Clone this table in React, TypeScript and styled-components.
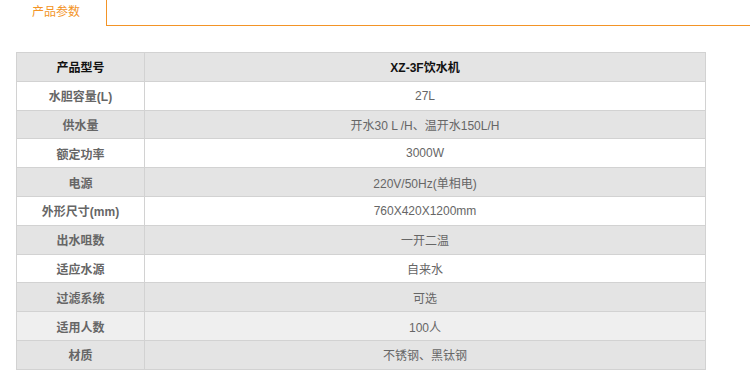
import styled, { createGlobalStyle } from "styled-components";

const GlobalStyle = createGlobalStyle`
  html, body {
    margin: 0;
    padding: 0;
    background: #fff;
    font-family: "Liberation Sans", "Noto Sans CJK SC", sans-serif;
  }
`;

const Page = styled.div`
  width: 750px;
  height: 382px;
  overflow: hidden;
`;

const TabBar = styled.div`
  display: flex;
  height: 26px;
`;

const Tab = styled.div`
  width: 107px;
  height: 26px;
  box-sizing: border-box;
  border-right: 1px solid #f39426;
  color: #f39426;
  font-size: 12px;
  line-height: 25px;
  padding-left: 32px;
`;

const TabRest = styled.div`
  flex: 1;
  border-bottom: 1px solid #f39426;
`;

const Body = styled.div`
  padding: 26px 0 0 16px;
`;

const Table = styled.table`
  width: 690px;
  border-collapse: collapse;
  font-size: 12px;
  table-layout: fixed;
`;

const Row = styled.tr<{ $bg: string }>`
  background: ${(p) => p.$bg};
`;

const Cell = styled.td<{ $head?: boolean; $label?: boolean }>`
  border: 1px solid #d2d2d2;
  height: 27.8px;
  padding: 0;
  text-align: center;
  vertical-align: middle;
  color: ${(p) => (p.$head ? "#111" : "#666")};
  font-weight: ${(p) => (p.$head || p.$label ? "bold" : "normal")};
`;

const rows: [string, string][] = [
  ["水胆容量(L)", "27L"],
  ["供水量", "开水30 L /H、温开水150L/H"],
  ["额定功率", "3000W"],
  ["电源", "220V/50Hz(单相电)"],
  ["外形尺寸(mm)", "760X420X1200mm"],
  ["出水咀数", "一开二温"],
  ["适应水源", "自来水"],
  ["过滤系统", "可选"],
  ["适用人数", "100人"],
  ["材质", "不锈钢、黑钛钢"],
];

function rowBg(i: number) {
  if (i === 8) return "#efefef";
  return i % 2 === 0 ? "#fff" : "#e4e4e4";
}

export default function App() {
  return (
    <Page>
      <GlobalStyle />
      <TabBar>
        <Tab>产品参数</Tab>
        <TabRest />
      </TabBar>
      <Body>
        <Table>
          <colgroup>
            <col style={{ width: 128 }} />
            <col />
          </colgroup>
          <tbody>
            <Row $bg="#e4e4e4">
              <Cell $head>产品型号</Cell>
              <Cell $head>XZ-3F饮水机</Cell>
            </Row>
            {rows.map(([k, v], i) => (
              <Row key={k} $bg={rowBg(i)}>
                <Cell $label>{k}</Cell>
                <Cell>{v}</Cell>
              </Row>
            ))}
          </tbody>
        </Table>
      </Body>
    </Page>
  );
}
